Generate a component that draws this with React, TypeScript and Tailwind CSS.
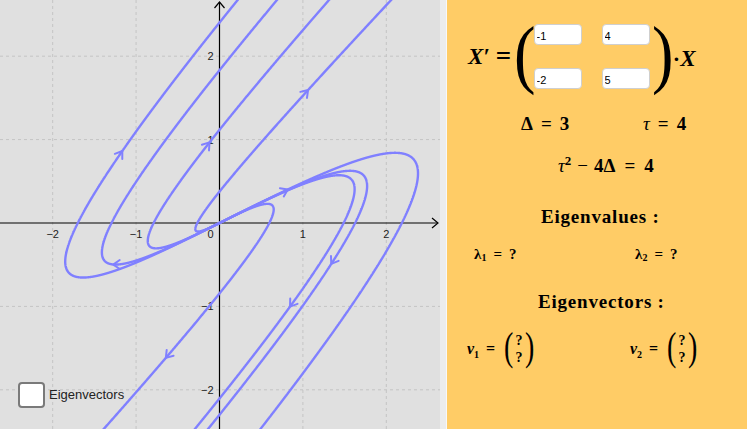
import React from 'react';

// plot geometry (pixels)
const W = 440;
const H = 429;
const OX = 219.5;
const OY = 223;
const U = 83.4;

const px = (x: number, y: number): [number, number] => [OX + x * U, OY - y * U];

// trajectories of X' = A X, A = [[-1,4],[-2,5]]: x = 2u + k u^3, y = u + k u^3
const branches = [
  { s: -1, k: -0.3463, a: -2.02 },
  { s: -1, k: -0.596, a: -0.74 },
  { s: -1, k: -1.602, a: -1.08 },
  { s: -1, k: -14.09, a: -0.53 },
  { s: 1, k: -0.2092, a: 0.4 },
  { s: 1, k: -0.3783, a: 1.82 },
  { s: 1, k: -0.4516, a: 1.84 },
  { s: 1, k: -2.805, a: 0.97 },
];

function branchPath(s: number, k: number) {
  const pts: string[] = [];
  const N = 4000;
  for (let i = 0; i <= N; i++) {
    const u = (s * 4 * i) / N;
    const [X, Y] = px(2 * u + k * u * u * u, u + k * u * u * u);
    pts.push(`${X.toFixed(2)},${Y.toFixed(2)}`);
    if (Y < -10 || Y > H + 10 || X < -10 || X > W + 10) break;
  }
  return 'M' + pts.join('L');
}

function arrowPath(s: number, k: number, a: number) {
  const [X, Y] = px(2 * a + k * a ** 3, a + k * a ** 3);
  let dx = s * (2 + 3 * k * a * a);
  let dy = -s * (1 + 3 * k * a * a);
  const l = Math.hypot(dx, dy);
  dx /= l;
  dy /= l;
  const L = 8;
  const c = Math.cos(0.6);
  const sn = Math.sin(0.6);
  const tx = X + dx * 3;
  const ty = Y + dy * 3;
  const p1 = [tx - L * (dx * c - dy * sn), ty - L * (dy * c + dx * sn)];
  const p2 = [tx - L * (dx * c + dy * sn), ty - L * (dy * c - dx * sn)];
  return `M${p1[0]},${p1[1]}L${tx},${ty}L${p2[0]},${p2[1]}`;
}

const gridX = [-2, -1, 1, 2].map((v) => OX + v * U);
const gridY = [-2, -1, 1, 2].map((v) => OY - v * U);

function Plot() {
  return (
    <div className="relative w-[440px] h-[429px] bg-[#e0e0e0] overflow-hidden">
      <svg width={W} height={H} className="block">
        {gridX.map((x) => (
          <line key={'gx' + x} x1={x} y1={0} x2={x} y2={H} stroke="#c4c4c4" strokeWidth={1} strokeDasharray="3 3" />
        ))}
        {gridY.map((y) => (
          <line key={'gy' + y} x1={0} y1={y} x2={W} y2={y} stroke="#c4c4c4" strokeWidth={1} strokeDasharray="3 3" />
        ))}
        <line x1={0} y1={OY} x2={438} y2={OY} stroke="#000" strokeWidth={1.2} />
        <path d={`M432,${OY - 5}L438,${OY}L432,${OY + 5}`} fill="none" stroke="#000" strokeWidth={1.2} />
        <line x1={OX} y1={H} x2={OX} y2={2} stroke="#000" strokeWidth={1.2} />
        <path d={`M${OX - 5},8L${OX},2L${OX + 5},8`} fill="none" stroke="#000" strokeWidth={1.2} />
        <g fontFamily="'Liberation Sans', Arial, sans-serif" fontSize={11} fill="#222">
          <text x={OX - 2 * U} y={238} textAnchor="middle">−2</text>
          <text x={OX - U} y={238} textAnchor="middle">−1</text>
          <text x={OX - 6} y={238} textAnchor="end">0</text>
          <text x={OX + U} y={238} textAnchor="middle">1</text>
          <text x={OX + 2 * U} y={238} textAnchor="middle">2</text>
          <text x={OX - 6} y={OY - 2 * U + 4} textAnchor="end">2</text>
          <text x={OX - 6} y={OY - U + 4} textAnchor="end">1</text>
          <text x={OX - 6} y={OY + U + 4} textAnchor="end">−1</text>
          <text x={OX - 6} y={OY + 2 * U + 4} textAnchor="end">−2</text>
        </g>
        <g fill="none" stroke="#8080ff" strokeWidth={2.4} strokeLinejoin="round" strokeLinecap="round">
          {branches.map((b, i) => (
            <path key={'b' + i} d={branchPath(b.s, b.k)} />
          ))}
          {branches.map((b, i) => (
            <path key={'a' + i} d={arrowPath(b.s, b.k, b.a)} strokeWidth={2} />
          ))}
        </g>
      </svg>
      <label className="absolute left-[18px] top-[382px] flex items-center gap-[4px]">
        <span className="w-[27px] h-[26px] rounded-[4px] border-2 border-[#7a7a7a] bg-white" />
        <span className="text-[13px] text-[#222] font-['Liberation_Sans',Arial,sans-serif]">Eigenvectors</span>
      </label>
    </div>
  );
}

const serif = "font-['Liberation_Serif','Times_New_Roman',serif]";

function Cell({ v }: { v: string }) {
  return (
    <input
      readOnly
      defaultValue={v}
      className="w-[48px] h-[21px] rounded-[4px] border border-[#cfcfcf] bg-white pl-[2px] pt-[3px] text-[11px] text-black outline-none font-['Liberation_Sans',Arial,sans-serif]"
    />
  );
}

function ColVec() {
  return (
    <span className="flex items-center">
      <span className="text-[40px] leading-none font-normal mt-[-4px] scale-x-[0.7]">(</span>
      <span className="flex flex-col items-center text-[14px] leading-[17px] font-bold mx-[0px]">
        <span>?</span>
        <span>?</span>
      </span>
      <span className="text-[40px] leading-none font-normal mt-[-4px] scale-x-[0.7]">)</span>
    </span>
  );
}

function Panel() {
  return (
    <div className={`flex-1 h-[429px] bg-[#ffcc66] text-black flex flex-col ${serif}`}>
      <div className="flex items-center h-[67px] mt-[23px] ml-[21px]">
        <span className="text-[23px] font-bold italic leading-none">X′</span>
        <span className="text-[27px] font-bold leading-none ml-[6px]">=</span>
        <span className="text-[76px] leading-none ml-[1px] mt-[-8px] scale-x-[0.85]">(</span>
        <div className="grid grid-cols-2 gap-x-[20px] gap-y-[23px] ml-[-4px]">
          <Cell v="-1" />
          <Cell v="4" />
          <Cell v="-2" />
          <Cell v="5" />
        </div>
        <span className="text-[76px] leading-none ml-[0px] mt-[-8px] scale-x-[0.85]">)</span>
        <span className="text-[22px] font-bold leading-none mt-[4px] ml-[-2px]">·</span>
        <span className="text-[23px] font-bold italic leading-none mt-[4px]">X</span>
      </div>

      <div className="flex items-center h-[24px] mt-[22px] text-[19px] font-bold">
        <span className="ml-[74px] w-[122px]">
          Δ<span className="mx-[8px]">=</span>3
        </span>
        <span>
          <span className="italic font-normal">τ</span>
          <span className="mx-[8px]">=</span>4
        </span>
      </div>

      <div className="flex items-center h-[24px] mt-[18px] text-[19px] font-bold">
        <span className="ml-[111px]">
          <span className="italic font-normal">τ</span>
          <sup className="text-[13px]">2</sup>
          <span className="mx-[6px] font-normal">−</span>4Δ<span className="mx-[9px]">=</span>4
        </span>
      </div>

      <div className="flex items-center h-[24px] mt-[27px] text-[19px] font-bold tracking-[0.8px]">
        <span className="ml-[94px]">Eigenvalues :</span>
      </div>

      <div className="flex items-center h-[20px] mt-[15px] text-[15px] font-bold">
        <span className="ml-[27px] w-[161px]">
          λ<sub className="text-[10px]">1</sub>
          <span className="mx-[7px]">=</span>?
        </span>
        <span>
          λ<sub className="text-[10px]">2</sub>
          <span className="mx-[7px]">=</span>?
        </span>
      </div>

      <div className="flex items-center h-[24px] mt-[26px] text-[19px] font-bold tracking-[0.8px]">
        <span className="ml-[91px]">Eigenvectors :</span>
      </div>

      <div className="flex items-center h-[40px] mt-[15px] text-[16px] font-bold">
        <span className="ml-[20px] w-[163px] flex items-center">
          <span className="italic">v</span>
          <sub className="text-[10px] mt-[6px]">1</sub>
          <span className="mx-[7px]">=</span>
          <ColVec />
        </span>
        <span className="flex items-center">
          <span className="italic">v</span>
          <sub className="text-[10px] mt-[6px]">2</sub>
          <span className="mx-[7px]">=</span>
          <ColVec />
        </span>
      </div>
    </div>
  );
}

export default function App() {
  return (
    <div className="flex w-[747px] h-[429px] overflow-hidden">
      <Plot />
      <div className="w-[7px] h-[429px] bg-[#ececec] border-r border-[#f8f8f8]" />
      <Panel />
    </div>
  );
}
